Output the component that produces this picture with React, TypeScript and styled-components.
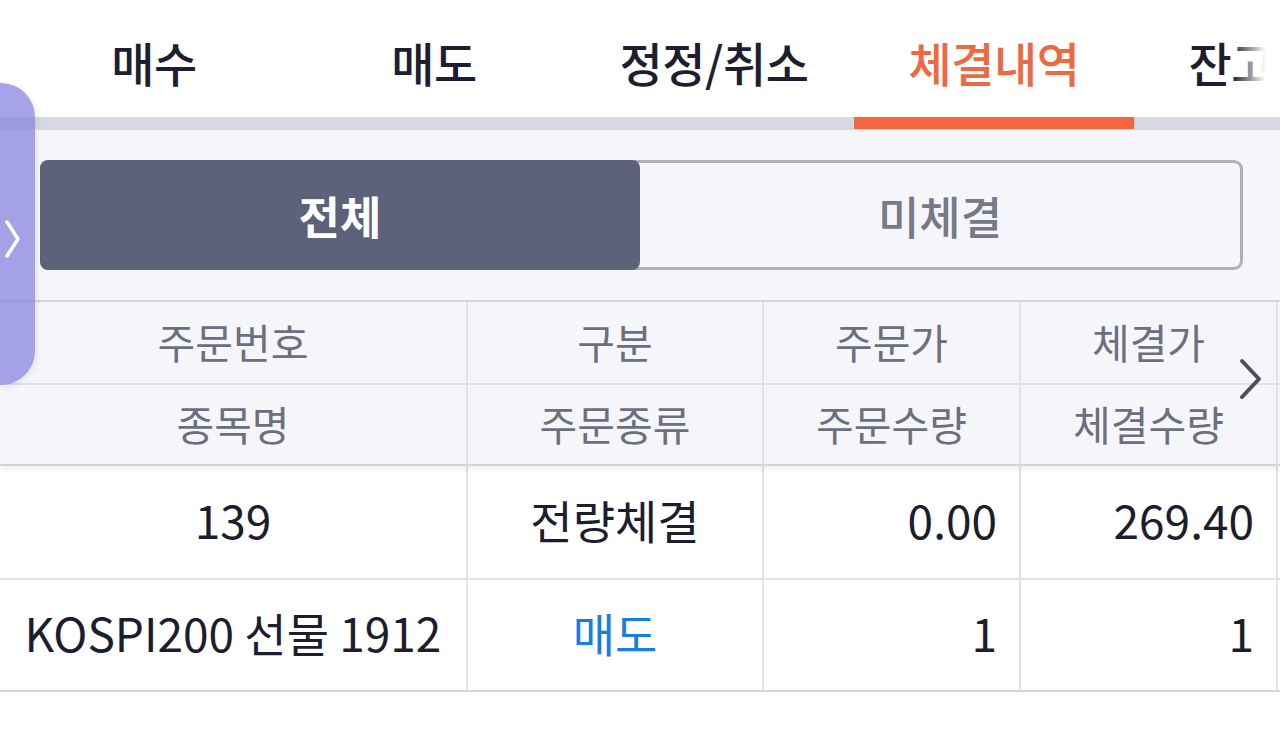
import React from 'react'
import styled, { createGlobalStyle } from 'styled-components'

const GlobalStyle = createGlobalStyle`
  html, body {
    margin: 0;
    padding: 0;
    background: #ffffff;
    font-family: "Noto Sans CJK KR", "Noto Sans", sans-serif;
  }
  #root {
    width: 1280px;
    height: 739px;
    overflow: hidden;
    position: relative;
  }
`

const Page = styled.div`
  width: 1280px;
  height: 739px;
  overflow: hidden;
  position: relative;
  background: #ffffff;
`

const TabBar = styled.div`
  position: relative;
  display: flex;
  padding-left: 14px;
  height: 117px;
  background: #ffffff;
  overflow: hidden;
  &::after {
    content: '';
    position: absolute;
    right: 0;
    top: 0;
    width: 48px;
    height: 100%;
    background: linear-gradient(to right, rgba(255,255,255,0), #ffffff 70%);
  }
`

const Tab = styled.div<{ $active?: boolean }>`
  flex: 0 0 280px;
  display: flex;
  align-items: center;
  justify-content: center;
  padding-top: 6px;
  font-size: 47px;
  font-weight: 500;
  letter-spacing: -0.5px;
  white-space: nowrap;
  color: ${p => (p.$active ? '#ee6842' : '#1d1e2f')};
`

const TabTrack = styled.div`
  display: flex;
  padding-left: 14px;
  height: 13px;
  background: #d6d9e1;
`

const TabIndicator = styled.div<{ $index: number }>`
  margin-left: ${p => p.$index * 280}px;
  width: 280px;
  height: 12px;
  background: #f4663f;
`

const Content = styled.div`
  background: #f6f6fa;
  padding: 30px 37px 30px 40px;
`

const Segment = styled.div`
  display: flex;
  height: 110px;
  border: 3px solid #aeb0bc;
  border-radius: 9px;
  box-sizing: border-box;
`

const SegmentButton = styled.div<{ $active?: boolean }>`
  flex: 1;
  display: flex;
  align-items: center;
  justify-content: center;
  font-size: 45px;
  font-weight: ${p => (p.$active ? 700 : 500)};
  color: ${p => (p.$active ? '#ffffff' : '#767988')};
  background: ${p => (p.$active ? '#5d627b' : 'transparent')};
  border-radius: ${p => (p.$active ? '8px' : '0')};
  margin: ${p => (p.$active ? '-3px 0 -3px -3px' : '0')};
`

const Table = styled.div`
  position: relative;
`

const Grid = styled.div`
  display: grid;
  grid-template-columns: 468px 296px 257px 257px 60px;
`

const Head = styled(Grid)`
  background: #f6f6fa;
  border-top: 2px solid #d3d4dc;
  border-bottom: 2px solid #d3d4dc;
  box-shadow: 0 4px 6px rgba(0, 0, 0, 0.06);
  position: relative;
  z-index: 1;
`

const HeadCell = styled.div<{ $bottom?: boolean }>`
  height: 81px;
  display: flex;
  align-items: center;
  justify-content: center;
  padding-bottom: 3px;
  box-sizing: border-box;
  font-size: 41px;
  color: #6c6f7e;
  border-right: 2px solid #e1e2e8;
  border-top: ${p => (p.$bottom ? '2px solid #e1e2e8' : 'none')};
`

const Body = styled(Grid)`
  background: #ffffff;
  border-bottom: 2px solid #d3d4dc;
`

const Cell = styled.div<{ $align?: 'center' | 'right'; $tone?: 'blue'; $h: number; $line?: boolean }>`
  height: ${p => p.$h}px;
  display: flex;
  align-items: center;
  justify-content: ${p => (p.$align === 'right' ? 'flex-end' : 'center')};
  padding: 0 22px 6px;
  box-sizing: border-box;
  font-size: 46px;
  white-space: nowrap;
  color: ${p => (p.$tone === 'blue' ? '#1a7de0' : '#1c1d2e')};
  border-right: 2px solid #e1e2e8;
  border-bottom: ${p => (p.$line ? '2px solid #e1e2e8' : 'none')};
`

const Handle = styled.div`
  position: absolute;
  left: 0;
  top: 83px;
  width: 35px;
  height: 302px;
  background: rgba(136, 132, 224, 0.75);
  border-radius: 0 34px 34px 0;
  box-shadow: 2px 2px 6px rgba(0, 0, 0, 0.08);
  display: flex;
  align-items: center;
  z-index: 3;
  padding: 10px 0 0 4px;
  box-sizing: border-box;
`

const MoreArrow = styled.div`
  position: absolute;
  right: 16px;
  top: 57px;
  z-index: 2;
`

const tabs = ['매수', '매도', '정정/취소', '체결내역', '잔고내역']
const activeTab = 3

const headTop = ['주문번호', '구분', '주문가', '체결가', '']
const headBottom = ['종목명', '주문종류', '주문수량', '체결수량', '']

const rows = [
  { h: 114, cells: [['139', 'center'], ['전량체결', 'center'], ['0.00', 'right'], ['269.40', 'right']] },
  { h: 110, cells: [['KOSPI200 선물 1912', 'center'], ['매도', 'center', 'blue'], ['1', 'right'], ['1', 'right']] },
]

export default function App() {
  return (
    <Page>
      <GlobalStyle />
      <TabBar>
        {tabs.map((t, i) => (
          <Tab key={t} $active={i === activeTab}>{t}</Tab>
        ))}
      </TabBar>
      <TabTrack>
        <TabIndicator $index={activeTab} />
      </TabTrack>
      <Content>
        <Segment>
          <SegmentButton $active>전체</SegmentButton>
          <SegmentButton>미체결</SegmentButton>
        </Segment>
      </Content>
      <Table>
        <Head>
          {headTop.map((t, i) => <HeadCell key={'t' + i}>{t}</HeadCell>)}
          {headBottom.map((t, i) => <HeadCell key={'b' + i} $bottom>{t}</HeadCell>)}
        </Head>
        <Body>
          {rows.map((r, ri) => (
            <React.Fragment key={ri}>
              {r.cells.map((c, ci) => (
                <Cell
                  key={ci}
                  $h={r.h}
                  $line={ri === 0}
                  $align={c[1] as 'center' | 'right'}
                  $tone={c[2] as 'blue' | undefined}
                >
                  {c[0]}
                </Cell>
              ))}
              <Cell $h={r.h} $line={ri === 0} />
            </React.Fragment>
          ))}
        </Body>
        <MoreArrow>
          <svg width="26" height="44" viewBox="0 0 26 44">
            <path d="M4 4 L21 22 L4 40" fill="none" stroke="#4b4e60" strokeWidth="4" strokeLinecap="round" strokeLinejoin="round" />
          </svg>
        </MoreArrow>
      </Table>
      <Handle>
        <svg width="18" height="40" viewBox="0 0 18 40">
          <path d="M3 3 L14 20 L3 37" fill="none" stroke="#ffffff" strokeWidth="3.5" strokeLinecap="round" strokeLinejoin="round" />
        </svg>
      </Handle>
    </Page>
  )
}
